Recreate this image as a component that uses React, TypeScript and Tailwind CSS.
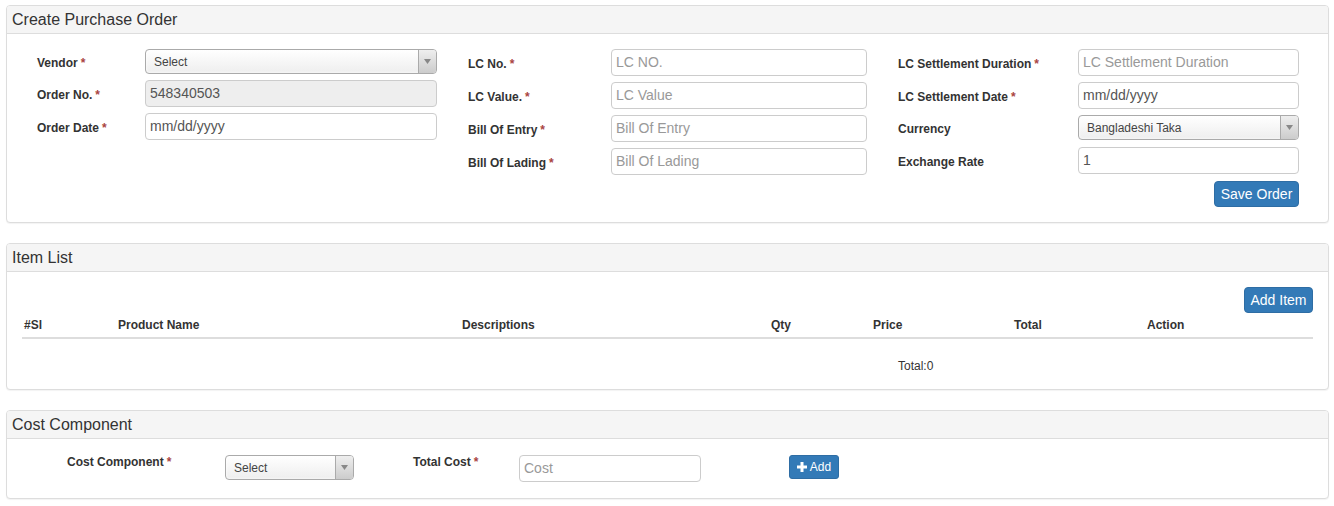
const font = { fontFamily: '"Liberation Sans", Arial, sans-serif' };

function Req() {
  return <span className="text-[#a94442] ml-[3px]">*</span>;
}

function Label({ text, req, w }: { text: string; req?: boolean; w: string }) {
  return (
    <div className={`${w} shrink-0 pt-[2px] text-[12px] font-bold text-[#333] leading-none`}>
      {text}
      {req && <Req />}
    </div>
  );
}

function TextInput({ placeholder, value, disabled, w }: { placeholder?: string; value?: string; disabled?: boolean; w: string }) {
  return (
    <div
      className={`${w} h-[27px] shrink-0 rounded-[4px] border border-[#ccc] flex items-center px-[4px] text-[14px] ${
        disabled ? 'bg-[#eee] text-[#555]' : 'bg-white'
      } ${value ? 'text-[#555]' : 'text-[#999]'}`}
    >
      {value ?? placeholder}
    </div>
  );
}

function Select({ value, w }: { value: string; w: string }) {
  return (
    <div
      className={`${w} h-[25px] shrink-0 rounded-[4px] border border-[#aaa] flex items-stretch overflow-hidden bg-linear-to-b from-white to-[#eee] shadow-[0_0_3px_#fff_inset]`}
    >
      <div className="flex-1 flex items-center pl-[8px] text-[12px] text-[#444]">{value}</div>
      <div className="w-[18px] border-l border-[#aaa] bg-linear-to-b from-[#eee] to-[#ccc] flex items-center justify-center">
        <svg width="7" height="5" viewBox="0 0 7 5">
          <path d="M0 0 H7 L3.5 5 Z" fill="#888" />
        </svg>
      </div>
    </div>
  );
}

function Row({ children }: { children: React.ReactNode }) {
  return <div className="flex items-center">{children}</div>;
}

function Panel({ title, children, bodyClass }: { title: string; children: React.ReactNode; bodyClass: string }) {
  return (
    <div className="ml-[6px] w-[1323px] border border-[#ddd] rounded-[4px] bg-white shadow-[0_1px_1px_rgba(0,0,0,0.05)]">
      <div className="h-[28px] bg-[#f5f5f5] border-b border-[#ddd] rounded-t-[3px] flex items-center pl-[5px] text-[16px] text-[#333]">
        {title}
      </div>
      <div className={bodyClass}>{children}</div>
    </div>
  );
}

export default function App() {
  const cols = [
    { label: '#Sl', w: 'w-[94px]' },
    { label: 'Product Name', w: 'w-[344px]' },
    { label: 'Descriptions', w: 'w-[309px]' },
    { label: 'Qty', w: 'w-[102px]' },
    { label: 'Price', w: 'w-[141px]' },
    { label: 'Total', w: 'w-[133px]' },
    { label: 'Action', w: 'flex-1' },
  ];

  return (
    <div className="min-h-[506px] bg-white pt-[5px] flex flex-col gap-[20px]" style={font}>
      <Panel title="Create Purchase Order" bodyClass="pt-[15px] pb-[15px] pl-[30px] flex gap-[31px]">
        <div className="flex flex-col gap-[6px]">
          <Row>
            <Label text="Vendor" req w="w-[108px]" />
            <Select value="Select" w="w-[292px]" />
          </Row>
          <Row>
            <Label text="Order No." req w="w-[108px]" />
            <TextInput value="548340503" disabled w="w-[292px]" />
          </Row>
          <Row>
            <Label text="Order Date" req w="w-[108px]" />
            <TextInput value="mm/dd/yyyy" w="w-[292px]" />
          </Row>
        </div>
        <div className="flex flex-col gap-[6px]">
          <Row>
            <Label text="LC No." req w="w-[143px]" />
            <TextInput placeholder="LC NO." w="w-[256px]" />
          </Row>
          <Row>
            <Label text="LC Value." req w="w-[143px]" />
            <TextInput placeholder="LC Value" w="w-[256px]" />
          </Row>
          <Row>
            <Label text="Bill Of Entry" req w="w-[143px]" />
            <TextInput placeholder="Bill Of Entry" w="w-[256px]" />
          </Row>
          <Row>
            <Label text="Bill Of Lading" req w="w-[143px]" />
            <TextInput placeholder="Bill Of Lading" w="w-[256px]" />
          </Row>
        </div>
        <div className="flex flex-col gap-[6px]">
          <Row>
            <Label text="LC Settlement Duration" req w="w-[180px]" />
            <TextInput placeholder="LC Settlement Duration" w="w-[221px]" />
          </Row>
          <Row>
            <Label text="LC Settlement Date" req w="w-[180px]" />
            <TextInput value="mm/dd/yyyy" w="w-[221px]" />
          </Row>
          <Row>
            <Label text="Currency" w="w-[180px]" />
            <Select value="Bangladeshi Taka" w="w-[221px]" />
          </Row>
          <div className="mt-[1px]">
            <Row>
              <Label text="Exchange Rate" w="w-[180px]" />
              <TextInput value="1" w="w-[221px]" />
            </Row>
          </div>
          <div className="flex justify-end mt-[1px]">
            <button className="h-[26px] w-[85px] rounded-[4px] bg-[#337ab7] border border-[#2e6da4] text-white text-[14px] flex items-center justify-center">
              Save Order
            </button>
          </div>
        </div>
      </Panel>

      <Panel title="Item List" bodyClass="pt-[15px] px-[15px] pb-[17px]">
        <div className="flex justify-end">
          <button className="h-[26px] w-[69px] rounded-[4px] bg-[#337ab7] border border-[#2e6da4] text-white text-[14px] flex items-center justify-center">
            Add Item
          </button>
        </div>
        <div className="flex border-b-2 border-[#ddd] h-[26px] items-center pb-[1px]">
          {cols.map((c) => (
            <div key={c.label} className={`${c.w} pl-[2px] text-[12px] font-bold text-[#333]`}>
              {c.label}
            </div>
          ))}
        </div>
        <div className="pl-[876px] pt-[21px] text-[12px] text-[#333] leading-none">Total:0</div>
      </Panel>

      <Panel title="Cost Component" bodyClass="pt-[16px] pb-[16px] pl-[60px] flex items-start">
        <div className="w-[158px] pt-[1px] text-[12px] font-bold text-[#333] leading-none">
          Cost Component<Req />
        </div>
        <Select value="Select" w="w-[129px]" />
        <div className="w-[106px] ml-[59px] pt-[1px] text-[12px] font-bold text-[#333] leading-none">
          Total Cost<Req />
        </div>
        <div className="w-[182px] h-[27px] rounded-[4px] border border-[#ccc] flex items-center pl-[4px] text-[14px] text-[#999]">
          Cost
        </div>
        <button className="ml-[88px] h-[24px] w-[50px] rounded-[3px] bg-[#337ab7] border border-[#2e6da4] text-white text-[12px] flex items-center justify-center gap-[3px]">
          <svg width="10" height="10" viewBox="0 0 10 10">
            <path d="M3.5 0 H6.5 V3.5 H10 V6.5 H6.5 V10 H3.5 V6.5 H0 V3.5 H3.5 Z" fill="#fff" />
          </svg>
          Add
        </button>
      </Panel>
    </div>
  );
}
